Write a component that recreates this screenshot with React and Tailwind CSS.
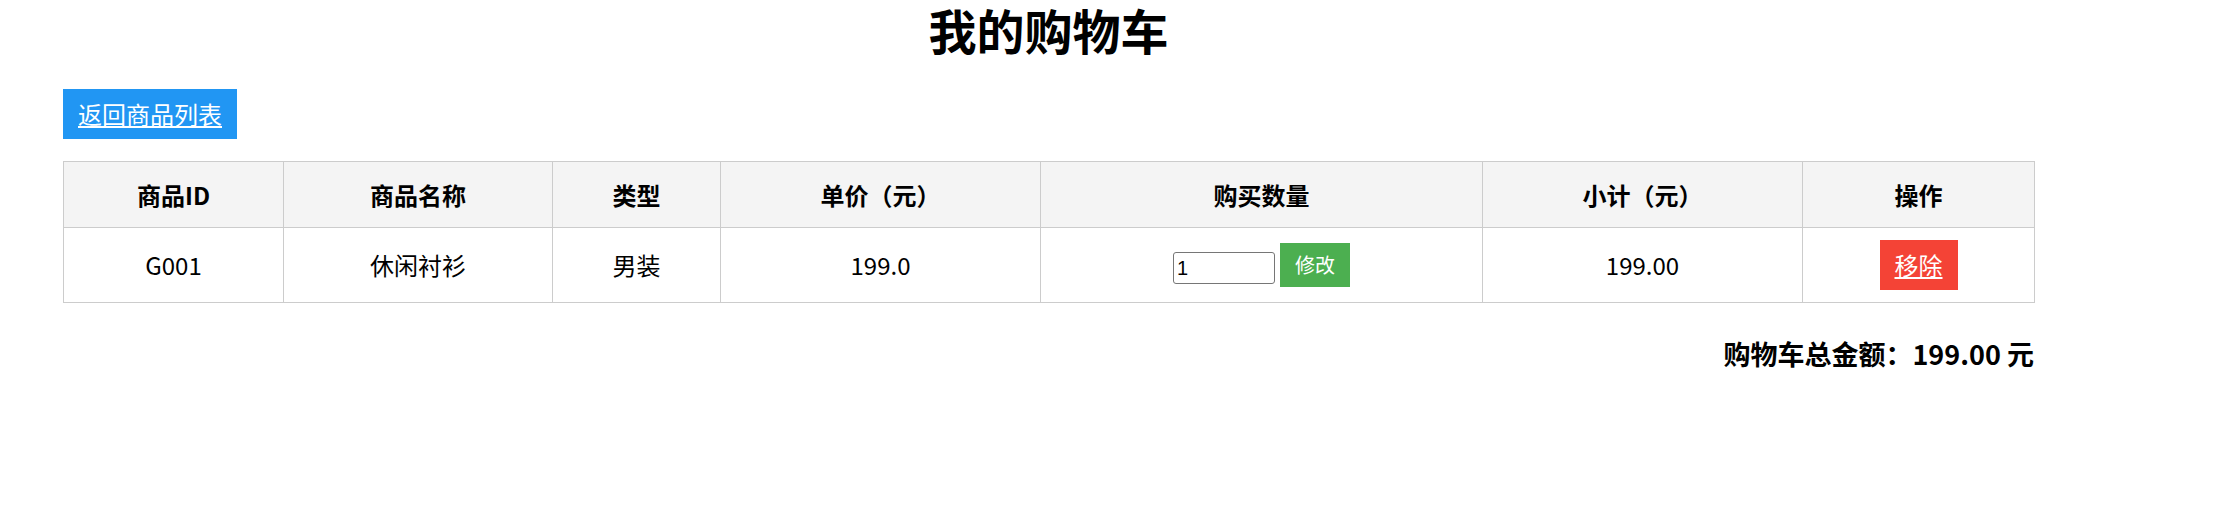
const items = [
    { id: "G001", name: "休闲衬衫", type: "男装", price: "199.0", qty: 1, subtotal: "199.00" },
]

const cols = ["220px", "269px", "168px", "320px", "442px", "320px", "232px"]
const heads = ["商品ID", "商品名称", "类型", "单价（元）", "购买数量", "小计（元）", "操作"]

const App = () => {
    return (
        <div className="min-h-screen bg-white text-black font-['Noto_Sans_CJK_SC','Noto_Sans',sans-serif]">
            <div className="ml-[63px] w-[1971px]">
                <h1 className="text-center text-[48px] font-bold leading-[58px]">我的购物车</h1>
                <a
                    href="#"
                    className="mt-[31px] inline-block bg-[#2196f3] text-white text-[24px] leading-[50px] h-[50px] px-[15px] underline"
                >
                    返回商品列表
                </a>
                <table className="mt-[22px] table-fixed border-collapse w-[1971px] text-[24px]">
                    <colgroup>
                        {cols.map((w, i) => (
                            <col key={i} style={{ width: w }} />
                        ))}
                    </colgroup>
                    <thead>
                        <tr className="bg-[#f4f4f4]">
                            {heads.map((h) => (
                                <th key={h} className="border border-[#cccccc] h-[66px] p-0 font-bold text-center align-middle">
                                    {h}
                                </th>
                            ))}
                        </tr>
                    </thead>
                    <tbody>
                        {items.map((item) => (
                            <tr key={item.id}>
                                <td className="border border-[#cccccc] h-[75px] p-0 text-center">{item.id}</td>
                                <td className="border border-[#cccccc] p-0 text-center">{item.name}</td>
                                <td className="border border-[#cccccc] p-0 text-center">{item.type}</td>
                                <td className="border border-[#cccccc] p-0 text-center">{item.price}</td>
                                <td className="border border-[#cccccc] p-0">
                                    <div className="flex items-center justify-center gap-[5px]">
                                        <input
                                            type="number"
                                            defaultValue={item.qty}
                                            className="mt-[6px] w-[102px] h-[32px] border border-[#767676] rounded-[3px] px-[3px] text-[20px] font-['Liberation_Sans',sans-serif] [appearance:textfield]"
                                        />
                                        <button className="bg-[#4caf50] text-white text-[20px] w-[70px] h-[44px] leading-[44px]">
                                            修改
                                        </button>
                                    </div>
                                </td>
                                <td className="border border-[#cccccc] p-0 text-center">{item.subtotal}</td>
                                <td className="border border-[#cccccc] p-0 text-center">
                                    <a
                                        href="#"
                                        className="inline-block bg-[#f44336] text-white underline h-[50px] leading-[50px] px-[15px]"
                                    >
                                        移除
                                    </a>
                                </td>
                            </tr>
                        ))}
                    </tbody>
                </table>
                <p className="mt-[35px] text-right text-[27px] font-bold leading-[32px]">购物车总金额：199.00 元</p>
            </div>
        </div>
    )
}
export default App
